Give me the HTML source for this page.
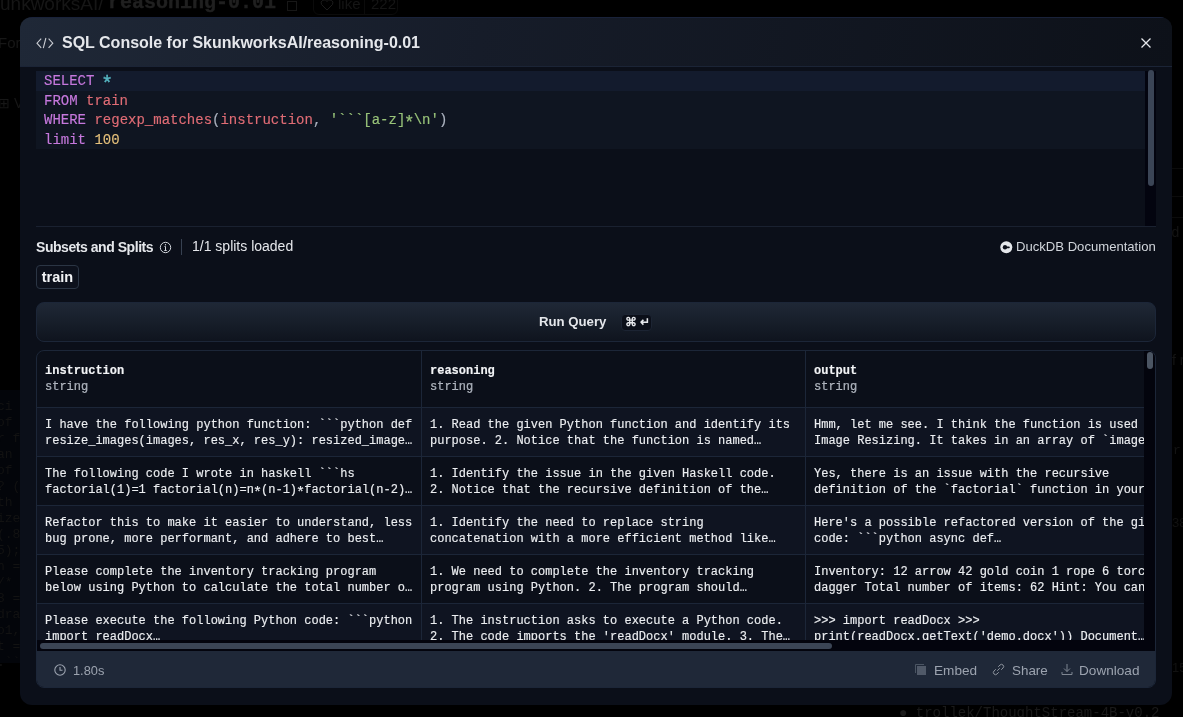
<!DOCTYPE html>
<html><head><meta charset="utf-8">
<style>
*{box-sizing:border-box;margin:0;padding:0}
html,body{width:1183px;height:717px;overflow:hidden;background:#000}
body{position:relative;font-family:"Liberation Sans",sans-serif}
#root{position:absolute;left:0;top:0;width:1183px;height:717px;will-change:transform}
.abs{position:absolute}
.mono{font-family:"Liberation Mono",monospace}
.nw{white-space:nowrap}
.bgt{color:#1e1e1e;white-space:nowrap;position:absolute}
#modal{position:absolute;left:20px;top:17px;width:1152px;height:688px;border-radius:12px;background:#0b0f19;overflow:hidden}
.line{position:absolute;left:36px;width:1109px;height:19.5px;font-family:"Liberation Mono",monospace;font-size:14px;line-height:19.5px;padding-left:8px;white-space:pre;color:#abb2bf;-webkit-text-stroke:0.15px currentColor}
.kw{color:#c678dd}.id{color:#e06c75}.op{color:#56b6c2}.str{color:#98c379}.num{color:#e5c07b}
.cell{position:absolute;font-family:"Liberation Mono",monospace;font-size:12px;line-height:16px;color:#eceef1;white-space:pre;-webkit-text-stroke:0.15px #eceef1}
.tstar{display:inline-block;transform:translateY(3px) scale(1.25)}
.star{display:inline-block;transform:translateY(4px) scale(1.4);-webkit-text-stroke:0.3px currentColor}
</style></head><body><div id="root">
<div class="bgt" style="left:0;top:-7px;font-size:19px;line-height:22px;color:#161616">unkworksAI/</div>
<div class="bgt mono" style="left:108px;top:-8px;font-size:20px;line-height:22px;font-weight:bold;color:#202020;-webkit-text-stroke:0.4px #202020">reasoning-0.01</div>
<svg class="abs" style="left:285px;top:0" width="12" height="11" viewBox="0 0 12 11"><rect x="2.5" y="1.5" width="9" height="9" stroke="#171717" fill="none"/></svg>
<div class="abs" style="left:313px;top:-6px;width:85px;height:21px;border:1px solid #0b0b0b;border-radius:6px"></div>
<div class="abs" style="left:364px;top:-6px;width:1px;height:21px;background:#0b0b0b"></div>
<svg class="abs" style="left:320px;top:0" width="14" height="11" viewBox="0 0 14 11"><path d="M7 10 L1.5 4.5 A2.8 2.8 0 0 1 7 1.5 A2.8 2.8 0 0 1 12.5 4.5 Z" stroke="#1c1c1c" fill="none"/></svg>
<div class="bgt" style="left:338px;top:-5px;font-size:15px;line-height:18px;color:#151515">like</div>
<div class="bgt" style="left:371px;top:-5px;font-size:15px;line-height:18px;color:#151515">222</div>
<div class="bgt" style="left:-2px;top:35px;font-size:15px;line-height:16px;color:#171717">For</div>
<div class="bgt" style="left:-2px;top:95px;font-size:14px;line-height:16px;color:#171717">&#8862; V</div>
<div class="abs" style="left:0;top:390px;width:20px;height:273px;background:#03050a"></div>
<div class="bgt mono" style="left:-3px;top:399.0px;font-size:13px;line-height:16px;color:#121212"> ci</div>
<div class="bgt mono" style="left:-3px;top:415.0px;font-size:13px;line-height:16px;color:#121212"> of</div>
<div class="bgt mono" style="left:-3px;top:431.0px;font-size:13px;line-height:16px;color:#121212">r f</div>
<div class="bgt mono" style="left:-3px;top:447.0px;font-size:13px;line-height:16px;color:#121212">an </div>
<div class="bgt mono" style="left:-3px;top:463.0px;font-size:13px;line-height:16px;color:#121212"> of</div>
<div class="bgt mono" style="left:-3px;top:479.0px;font-size:13px;line-height:16px;color:#121212">? (</div>
<div class="bgt mono" style="left:-3px;top:495.0px;font-size:13px;line-height:16px;color:#121212"> th</div>
<div class="bgt mono" style="left:-3px;top:511.0px;font-size:13px;line-height:16px;color:#121212">ize</div>
<div class="bgt mono" style="left:-3px;top:527.0px;font-size:13px;line-height:16px;color:#121212">(.8</div>
<div class="bgt mono" style="left:-3px;top:543.0px;font-size:13px;line-height:16px;color:#121212">5);</div>
<div class="bgt mono" style="left:-3px;top:559.0px;font-size:13px;line-height:16px;color:#121212"> h =</div>
<div class="bgt mono" style="left:-3px;top:575.0px;font-size:13px;line-height:16px;color:#121212"> /*</div>
<div class="bgt mono" style="left:-3px;top:591.0px;font-size:13px;line-height:16px;color:#121212">3 =</div>
<div class="bgt mono" style="left:-3px;top:607.0px;font-size:13px;line-height:16px;color:#121212">dra</div>
<div class="bgt mono" style="left:-3px;top:623.0px;font-size:13px;line-height:16px;color:#121212">o1,</div>
<div class="bgt mono" style="left:-3px;top:639.0px;font-size:13px;line-height:16px;color:#121212">t =</div>
<div class="bgt mono" style="left:-3px;top:655.0px;font-size:13px;line-height:16px;color:#121212">.``</div>
<div class="abs" style="left:1172px;top:168px;width:11px;height:1px;background:#0b0b0b"></div>
<div class="abs" style="left:1172px;top:196px;width:11px;height:1px;background:#0b0b0b"></div>
<div class="abs" style="left:1172px;top:217px;width:11px;height:1px;background:#0b0b0b"></div>
<div class="bgt" style="left:1171.5px;top:224px;font-size:14px;line-height:16px;color:#141414">d</div>
<div class="bgt" style="left:1172px;top:352px;font-size:14px;line-height:16px;color:#141414">f ro</div>
<div class="bgt mono" style="left:1173px;top:443px;font-size:13px;line-height:16px;color:#131313">r</div>
<div class="bgt" style="left:1172px;top:515px;font-size:13px;line-height:16px;color:#111111">38</div>
<div class="bgt" style="left:1172px;top:660px;font-size:13px;line-height:16px;color:#111111">15</div>
<div class="bgt mono" style="left:899px;top:704px;font-size:14px;line-height:18px;color:#1a1a1a">&#9679; trollek/ThoughtStream-4B-v0.2</div>
<div id="modal">
<div class="abs" style="left:0;top:0;width:1152px;height:50px;background:linear-gradient(100deg,#1f2837 0%,#161c29 40%,#0d1119 100%);border-bottom:1px solid #1b2436;border-top:1px solid #19223a"></div>
</div>
<svg class="abs" style="left:36px;top:37px" width="18" height="12" viewBox="0 0 18 12"><path d="M5.2 1.6 L1 6.2 L5.2 10.8 M12.6 1.6 L16.8 6.2 L12.6 10.8 M9.9 1 L7.3 11.2" stroke="#c9ccd2" stroke-width="1.1" fill="none"/></svg>
<div class="abs nw" style="left:62px;top:33px;font-size:16px;font-weight:bold;color:#e5e7eb;line-height:20px">SQL Console for SkunkworksAI/reasoning-0.01</div>
<svg class="abs" style="left:1141px;top:38px" width="10" height="10" viewBox="0 0 10 10"><path d="M0.5 0.5 L9.5 9.5 M9.5 0.5 L0.5 9.5" stroke="#e5e7eb" stroke-width="1.3"/></svg>
<div class="line" style="top:71.0px;background:#131b2d;padding-top:1px"><span class="kw">SELECT</span> <span class="op star">*</span></div>
<div class="line" style="top:90.5px;background:#0f1521;padding-top:1px"><span class="kw">FROM</span> <span class="id">train</span></div>
<div class="line" style="top:110.0px;background:#0f1521;padding-top:1px"><span class="kw">WHERE</span> <span class="id">regexp_matches</span>(<span class="id">instruction</span>, <span class="str">'```[a-z]<span class="tstar">*</span>\n'</span>)</div>
<div class="line" style="top:129.5px;background:#0f1521;padding-top:1px"><span class="kw">limit</span> <span class="num">100</span></div>
<div class="abs" style="left:1145px;top:71px;width:11px;height:155px;background:#03040f"></div>
<div class="abs" style="left:1148px;top:70px;width:6px;height:116px;border-radius:3px;background:#3b4556"></div>
<div class="abs" style="left:36px;top:226px;width:1120px;height:1px;background:#1a2130"></div>
<div class="abs nw" style="left:36px;top:239px;font-size:14px;letter-spacing:-0.45px;font-weight:bold;color:#e5e7eb;line-height:16px">Subsets and Splits</div>
<svg class="abs" style="left:159px;top:240.5px" width="13" height="13" viewBox="0 0 13 13"><circle cx="6.5" cy="6.5" r="5.2" stroke="#d1d5db" stroke-width="1" fill="none"/><path d="M6.5 5.5 V9.5 M5.3 9.5 H7.7 M5.5 5.5 H6.5" stroke="#d1d5db" stroke-width="1" fill="none"/><circle cx="6.5" cy="3.7" r="0.7" fill="#d1d5db"/></svg>
<div class="abs" style="left:181px;top:239px;width:1px;height:16px;background:#374151"></div>
<div class="abs nw" style="left:192px;top:238px;font-size:14px;color:#e5e7eb;line-height:16px">1/1 splits loaded</div>
<svg class="abs" style="left:1000px;top:240.5px" width="13" height="13" viewBox="0 0 13 13"><circle cx="6.3" cy="6.3" r="6" fill="#e5e7eb"/><circle cx="5" cy="6.3" r="2.2" fill="#0b0f19"/><rect x="6.2" y="5.5" width="3.6" height="1.7" rx="0.85" fill="#0b0f19"/></svg>
<div class="abs nw" style="left:1016px;top:239px;font-size:13.1px;color:#d1d5db;line-height:16px">DuckDB Documentation</div>
<div class="abs" style="left:36px;top:265px;width:43px;height:24px;border:1px solid #2b3544;border-radius:4px;background:#0d111c;font-size:14.5px;font-weight:bold;color:#f3f4f6;line-height:22px;text-align:center">train</div>
<div class="abs" style="left:36px;top:302px;width:1120px;height:40px;border:1px solid #1c2638;border-radius:8px;background:linear-gradient(180deg,#1f2836 0%,#0f141e 100%)"></div>
<div class="abs nw" style="left:539px;top:314px;font-size:13.2px;font-weight:bold;color:#e5e7eb;line-height:16px">Run Query</div>
<div class="abs nw" style="left:621px;top:313.5px;width:31px;height:17px;border:1px solid #1c2433;border-radius:4px;background:#0b0f19;font-size:11.5px;font-weight:bold;color:#e5e7eb;line-height:15px;padding-left:3px">&#8984; &#8629;</div>
<div id="tbl" class="abs" style="left:36px;top:350px;width:1120px;height:338px;border:1px solid #1c2638;border-radius:8px;overflow:hidden;background:#0b0f19">
<div class="abs" style="left:0;top:56px;width:1120px;height:49px;background:#0f1421;border-top:1px solid #1c2638"></div>
<div class="abs" style="left:0;top:105px;width:1120px;height:49px;background:#0b0f19;border-top:1px solid #1c2638"></div>
<div class="abs" style="left:0;top:154px;width:1120px;height:49px;background:#0f1421;border-top:1px solid #1c2638"></div>
<div class="abs" style="left:0;top:203px;width:1120px;height:49px;background:#0b0f19;border-top:1px solid #1c2638"></div>
<div class="abs" style="left:0;top:252px;width:1120px;height:49px;background:#0f1421;border-top:1px solid #1c2638"></div>
<div class="abs" style="left:384px;top:0;width:1px;height:300px;background:#1c2638"></div>
<div class="abs" style="left:768px;top:0;width:1px;height:300px;background:#1c2638"></div>
<div class="cell" style="left:8px;top:12px;font-weight:bold;color:#f3f4f6">instruction</div>
<div class="cell" style="left:8px;top:28px;color:#9ca3af">string</div>
<div class="cell" style="left:393px;top:12px;font-weight:bold;color:#f3f4f6">reasoning</div>
<div class="cell" style="left:393px;top:28px;color:#9ca3af">string</div>
<div class="cell" style="left:777px;top:12px;font-weight:bold;color:#f3f4f6">output</div>
<div class="cell" style="left:777px;top:28px;color:#9ca3af">string</div>
<div class="cell" style="left:8px;top:66px;width:380px;height:32px;overflow:hidden">I have the following python function: ```python def
resize_images(images, res_x, res_y): resized_image…</div>
<div class="cell" style="left:393px;top:66px;width:380px;height:32px;overflow:hidden">1. Read the given Python function and identify its
purpose. 2. Notice that the function is named…</div>
<div class="cell" style="left:777px;top:66px;width:330px;height:32px;overflow:hidden">Hmm, let me see. I think the function is used for
Image Resizing. It takes in an array of `images`</div>
<div class="cell" style="left:8px;top:115px;width:380px;height:32px;overflow:hidden">The following code I wrote in haskell ```hs
factorial(1)=1 factorial(n)=n<span class="tstar">*</span>(n-1)<span class="tstar">*</span>factorial(n-2)…</div>
<div class="cell" style="left:393px;top:115px;width:380px;height:32px;overflow:hidden">1. Identify the issue in the given Haskell code.
2. Notice that the recursive definition of the…</div>
<div class="cell" style="left:777px;top:115px;width:330px;height:32px;overflow:hidden">Yes, there is an issue with the recursive
definition of the `factorial` function in your</div>
<div class="cell" style="left:8px;top:164px;width:380px;height:32px;overflow:hidden">Refactor this to make it easier to understand, less
bug prone, more performant, and adhere to best…</div>
<div class="cell" style="left:393px;top:164px;width:380px;height:32px;overflow:hidden">1. Identify the need to replace string
concatenation with a more efficient method like…</div>
<div class="cell" style="left:777px;top:164px;width:330px;height:32px;overflow:hidden">Here&#x27;s a possible refactored version of the given
code: ```python async def…</div>
<div class="cell" style="left:8px;top:213px;width:380px;height:32px;overflow:hidden">Please complete the inventory tracking program
below using Python to calculate the total number o…</div>
<div class="cell" style="left:393px;top:213px;width:380px;height:32px;overflow:hidden">1. We need to complete the inventory tracking
program using Python. 2. The program should…</div>
<div class="cell" style="left:777px;top:213px;width:330px;height:32px;overflow:hidden">Inventory: 12 arrow 42 gold coin 1 rope 6 torch 1
dagger Total number of items: 62 Hint: You can</div>
<div class="cell" style="left:8px;top:262px;width:380px;height:32px;overflow:hidden">Please execute the following Python code: ```python
import readDocx…</div>
<div class="cell" style="left:393px;top:262px;width:380px;height:32px;overflow:hidden">1. The instruction asks to execute a Python code.
2. The code imports the &#x27;readDocx&#x27; module. 3. The…</div>
<div class="cell" style="left:777px;top:262px;width:330px;height:32px;overflow:hidden">&gt;&gt;&gt; import readDocx &gt;&gt;&gt;
print(readDocx.getText(&#x27;demo.docx&#x27;)) Document…</div>
<div class="abs" style="left:0;top:289px;width:1120px;height:11px;background:#03040d"></div>
<div class="abs" style="left:3px;top:292px;width:792px;height:6px;border-radius:3px;background:#3b4555"></div>
<div class="abs" style="left:1107px;top:0;width:11px;height:289px;background:#03040d"></div>
<div class="abs" style="left:1110px;top:1px;width:6px;height:17px;border-radius:3px;background:#4b5563"></div>
<div class="abs" style="left:0;top:300px;width:1120px;height:40px;background:#1f2838"></div>
</div>
<svg class="abs" style="left:54px;top:664px" width="12" height="12" viewBox="0 0 12 12"><circle cx="6" cy="6" r="5.2" stroke="#9ca3af" stroke-width="1.1" fill="none"/><path d="M6 3 V6.3 H8.5" stroke="#9ca3af" stroke-width="1.1" fill="none"/></svg>
<div class="abs nw" style="left:73px;top:662.5px;font-size:12.8px;color:#9ca3af;line-height:16px">1.80s</div>
<svg class="abs" style="left:914px;top:663px" width="13" height="13" viewBox="0 0 13 13"><rect x="3" y="3" width="9" height="9" fill="#505968"/><path d="M1.5 10 V1.5 H10" stroke="#4b5563" stroke-width="1" fill="none"/></svg>
<div class="abs nw" style="left:934px;top:662.5px;font-size:13.6px;color:#9ca3af;line-height:16px">Embed</div>
<svg class="abs" style="left:992px;top:663px" width="13" height="13" viewBox="0 0 13 13"><path d="M5.5 7.5 L7.5 5.5 M6.5 3.5 L8 2 A2.1 2.1 0 0 1 11 5 L9.5 6.5 M3.5 6.5 L2 8 A2.1 2.1 0 0 0 5 11 L6.5 9.5" stroke="#8e949e" stroke-width="1" fill="none" stroke-linecap="round"/></svg>
<div class="abs nw" style="left:1012px;top:662.5px;font-size:13.4px;color:#9ca3af;line-height:16px">Share</div>
<svg class="abs" style="left:1061px;top:663px" width="12" height="13" viewBox="0 0 12 13"><path d="M6 1 V8.5 M3 5.5 L6 8.5 L9 5.5 M1 9 V11.5 H11 V9" stroke="#7f8692" stroke-width="1" fill="none"/></svg>
<div class="abs nw" style="left:1079px;top:662.5px;font-size:13.6px;color:#9ca3af;line-height:16px">Download</div>
</div></body></html>
